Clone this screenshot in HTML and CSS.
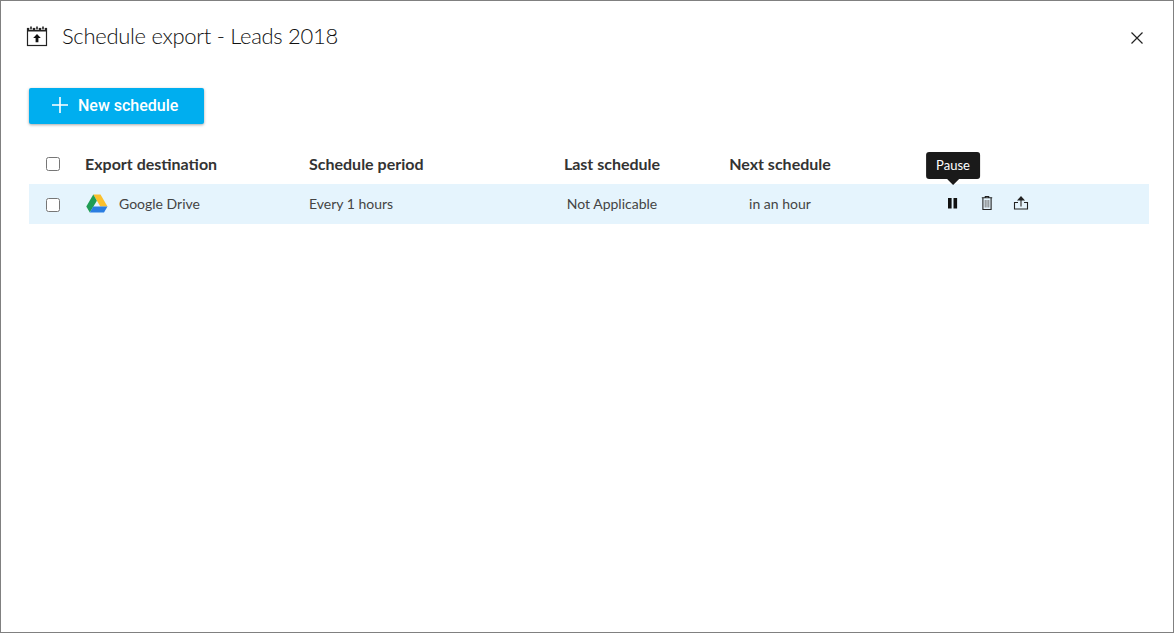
FILE: index.html
```html
<!DOCTYPE html>
<html lang="en">
<head>
    <meta charset="UTF-8">
    <title>Schedule export - Leads 2018</title>
    <link rel="stylesheet" href="styles.css">
</head>
<body>
    <div class="modal">
        <div class="modal-header">
            <svg class="title-icon" width="22" height="22" viewBox="0 0 22 22" fill="none" stroke="#222">
                <rect x="1.5" y="3.5" width="19" height="17" stroke-width="1.2"/>
                <path d="M1.500 3.500h19v3h-19z" fill="#222" stroke="none"/>
                <path d="M5 1v4M11 1v4M17 1v4" stroke="#fff" stroke-width="3.4"/>
                <path d="M5 1.500v3M11 1.500v3M17 1.500v3" stroke="#222" stroke-width="1.6"/>
                <path d="M11 9l3.800 4h-2.400v4.200h-2.800V13H7.200z" fill="#111" stroke="none"/>
            </svg>
            <h1 class="modal-title">Schedule export - Leads 2018</h1>
            <svg class="close-icon" width="14" height="14" viewBox="0 0 14 14" stroke="#222" stroke-width="1.2">
                <path d="M1.500 1.500l11 11M12.500 1.500l-11 11"/>
            </svg>
        </div>

        <button class="btn-new">
            <svg width="18" height="18" viewBox="0 0 18 18" stroke="#fff" stroke-width="1.6">
                <path d="M9 1v16M1 9h16"/>
            </svg>
            New schedule
        </button>

        <div class="table">
            <div class="row row-head">
                <div class="cell-check"><input type="checkbox" class="check"></div>
                <div>Export destination</div>
                <div>Schedule period</div>
                <div class="center">Last schedule</div>
                <div class="center">Next schedule</div>
                <div></div>
            </div>
            <div class="row row-item">
                <div class="cell-check"><input type="checkbox" class="check"></div>
                <div class="dest">
                    <svg width="22" height="19" viewBox="0 0 22 19">
                        <path d="M7.300 0.500h7.200l7 12h-7.200z" fill="#fbc02d"/>
                        <path d="M7.300 0.500l3.600 6.200-7.100 11.800-3.500-6z" fill="#1f9d55"/>
                        <path d="M7.200 12.500h14.300l-3.500 6H3.800z" fill="#2a7de1"/>
                    </svg>
                    <span>Google Drive</span>
                </div>
                <div>Every 1 hours</div>
                <div class="center">Not Applicable</div>
                <div class="center">in an hour</div>
                <div class="actions">
                    <div class="action">
                        <span class="tooltip">Pause</span>
                        <svg width="16" height="16" viewBox="0 0 16 16" fill="#111">
                            <rect x="3" y="3" width="3.600" height="10.500"/>
                            <rect x="8.500" y="3" width="3.600" height="10.500"/>
                        </svg>
                    </div>
                    <div class="action">
                        <svg width="16" height="16" viewBox="0 0 16 16" fill="none" stroke="#222">
                            <path d="M2.800 2.800h10.400M6.300 2.800V1.500h3.400v1.300M3.900 2.800v11.700h8.200V2.800" stroke-width="1.100"/>
                            <path d="M6.200 5v7.500M8 5v7.500M9.800 5v7.500" stroke="#777" stroke-width="1"/>
                        </svg>
                    </div>
                    <div class="action">
                        <svg width="18" height="18" viewBox="0 0 18 18" fill="none" stroke="#222" stroke-width="1.100">
                            <path d="M6 8.500H2.500v6.500h13V8.500H12"/>
                            <path d="M9 12.500V5" stroke="#555" stroke-width="1.400"/>
                            <path d="M9 2L5 6.400h8z" fill="#222" stroke="none"/>
                        </svg>
                    </div>
                </div>
            </div>
        </div>
    </div>
</body>
</html>
```

FILE: styles.css
```css
* {
    box-sizing: border-box;
}

body {
    margin: 0;
    font-family: "Lato", sans-serif;
    color: #333;
    background: #fff;
}

.modal {
    height: 633px;
    padding: 0 24px 0 28px;
    border: 1px solid #808080;
    background: #fff;
}

.modal-header {
    display: flex;
    align-items: center;
    height: 70px;
    margin-left: -3px;
    padding-bottom: 1px;
}

.title-icon {
    margin-right: 14px;
}

.modal-title {
    flex: 1;
    margin: 0;
    font-size: 22px;
    font-weight: 300;
    letter-spacing: -0.3px;
    color: #111;
}

.close-icon {
    margin-right: 5px;
    margin-top: 5px;
}

.btn-new {
    display: flex;
    align-items: center;
    gap: 9px;
    width: 175px;
    height: 36px;
    margin-top: 17px;
    padding: 0 0 2px 22px;
    border: none;
    border-radius: 2px;
    background: #00aeef;
    color: #fff;
    font-family: "Roboto", sans-serif;
    font-size: 16px;
    font-weight: 500;
    box-shadow: 0 1px 3px rgba(0, 0, 0, 0.35);
}

.table {
    margin-top: 19px;
}

.row {
    display: grid;
    grid-template-columns: 56px 224px 220px 166px 170px 1fr;
    align-items: center;
}

.row-head {
    height: 41px;
    font-size: 16px;
    font-weight: 700;
    color: #333;
}

.row-item {
    height: 40px;
    padding-bottom: 2px;
    background: #e5f4fd;
    font-size: 14px;
    color: #444;
}

.cell-check {
    display: flex;
    justify-content: center;
    width: 48px;
}

.check {
    width: 14px;
    height: 14px;
    margin: 0;
}

.row-head .check {
    margin-top: 1px;
}

.row-item .check {
    margin-top: 3px;
}

.center {
    text-align: center;
}

.dest {
    display: flex;
    align-items: center;
    gap: 11px;
    padding-left: 1px;
}

.actions {
    display: flex;
    align-items: center;
    gap: 16px;
    padding-left: 79px;
}

.action {
    position: relative;
    display: flex;
    justify-content: center;
    width: 18px;
}

.tooltip {
    position: absolute;
    left: 50%;
    bottom: 32px;
    transform: translateX(-50%);
    padding: 6px 10px;
    border-radius: 3px;
    background: #1a1a1a;
    color: #fff;
    font-size: 13px;
    line-height: 15px;
    white-space: nowrap;
}

.tooltip::after {
    content: "";
    position: absolute;
    left: 50%;
    top: 100%;
    margin-left: -6px;
    border: 6px solid transparent;
    border-bottom: none;
    border-top-color: #1a1a1a;
}
```
